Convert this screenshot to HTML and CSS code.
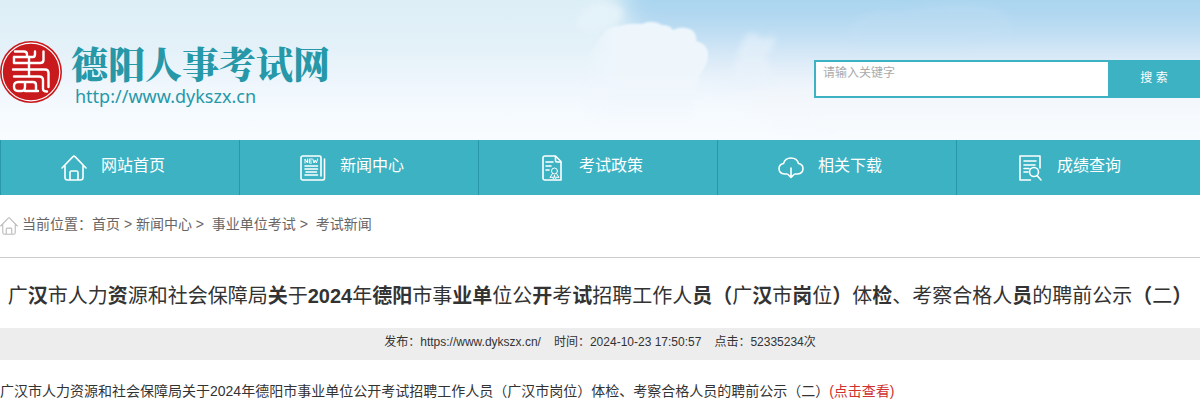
FILE: index.html
```
<!DOCTYPE html>
<html lang="zh-CN">
<head>
    <meta charset="UTF-8">
    <title>德阳人事考试网</title>
    <link rel="stylesheet" href="styles.css">
</head>
<body>

<header class="header">
    <svg class="sky" viewBox="0 0 1200 140" preserveAspectRatio="none" aria-hidden="true">
        <defs>
            <linearGradient id="blue" x1="0" y1="0" x2="0" y2="140" gradientUnits="userSpaceOnUse">
                <stop offset="0" stop-color="#a8d4ef"/>
                <stop offset=".2" stop-color="#b9dbf2"/>
                <stop offset=".45" stop-color="#dfecf8"/>
                <stop offset=".65" stop-color="#f3f7fc"/>
                <stop offset="1" stop-color="#f8fbfe"/>
            </linearGradient>
            <linearGradient id="cloud" x1="0" y1="0" x2="0" y2="1">
                <stop offset="0" stop-color="#edf6fc"/>
                <stop offset=".6" stop-color="#eff6fc"/>
                <stop offset="1" stop-color="#f1f7fd" stop-opacity="0"/>
            </linearGradient>
            <linearGradient id="left" x1="0" y1="0" x2="1" y2="0">
                <stop offset="0" stop-color="#000"/>
                <stop offset=".25" stop-color="#fff"/>
            </linearGradient>
            <mask id="side"><rect x="580" y="0" width="150" height="140" fill="url(#left)"/></mask>
            <filter id="soft" x="-30%" y="-30%" width="160%" height="160%"><feGaussianBlur stdDeviation="1"/></filter>
            <filter id="haze" x="-50%" y="-50%" width="200%" height="200%"><feGaussianBlur stdDeviation="12"/></filter>
            <filter id="mist" x="-50%" y="-50%" width="200%" height="200%"><feGaussianBlur stdDeviation="3"/></filter>
        </defs>
        <path d="M615 -40H1260V180H830L760 100 690 70 630 30Z" fill="url(#blue)" filter="url(#haze)"/>
        <path d="M580 14Q590 0 606 3Q622 3 623 14Q620 24 606 27L592 34 576 26Z" fill="#e6f3fa" opacity=".8" filter="url(#mist)"/>
        <g mask="url(#side)">
            <path d="M603 34Q608 26 620 26Q630 23 642 24Q652 19 662 25Q670 25 673 30Q682 25 692 30Q697 34 696 41Q708 44 708 55Q708 64 700 74L690 120 560 120 590 50Z" fill="url(#cloud)" filter="url(#soft)"/>
        </g>
        <path d="M738 54Q742 36 752 32Q762 42 774 36Q778 44 766 56L776 84 730 84Z" fill="#e9f3fb" opacity=".6" filter="url(#mist)"/>
        <path d="M850 26Q870 6 900 12Q940 0 990 6Q1016 14 1010 34L960 44 850 44Z" fill="#c6e1f4" opacity=".25" filter="url(#mist)"/>
    </svg>

    <a class="logo" href="#">
        <svg class="seal" viewBox="0 0 62 62" aria-hidden="true">
            <circle cx="31" cy="31" r="31" fill="#c8191d"/>
            <circle cx="31" cy="31" r="28.800" fill="none" stroke="#fff" stroke-width="1.2"/>
            <g fill="none" stroke="#fff" stroke-width="2.400" stroke-linejoin="round" stroke-linecap="round">
                <path d="M15 10.500H24Q27 10.500 27 13.500V16M14 16H33Q35 16 35 13V10.500"/>
                <path d="M14 16V22H40Q43.500 22 43.500 19V10.500M29 16V35"/>
                <path d="M13 28.500H45Q48.500 28.500 48.500 32V46"/>
                <path d="M14 35.500H39Q43 35.500 43 39V48Q43 50.500 47 50.500"/>
                <path d="M18 41H33Q36 41 36 44V50M18 41Q14 41 14 45.500Q14 50 18 50H22Q25 50 25 46V41M25 50H38"/>
            </g>
        </svg>
        <span class="logo-text">
            <strong>德阳人事考试网</strong>
            <span>http://www.dykszx.cn</span>
        </span>
    </a>

    <form class="search">
        <input type="text" name="keyword" placeholder="请输入关键字" aria-label="请输入关键字">
        <button type="submit">搜 索</button>
    </form>
</header>

<nav class="nav">
    <a href="#">
        <svg viewBox="0 0 26 26"><path d="M1 13 12 1.600Q13 .6 14 1.600L25 13M4 11V22.500Q4 25 6.500 25H19.500Q22 25 22 22.500V11M9 25V17.500Q9 16 10.500 16H15.500Q17 16 17 17.500V25"/></svg>
        网站首页
    </a>
    <a href="#">
        <svg viewBox="0 0 26 26"><path d="M21 21V2.500Q21 1 19.500 1H3Q1 1 1 3V23Q1 25 3 25H23Q24.500 25 24.500 23.500V4M5 11H17.500M5 14H17.500M6 17H16.500M5 20H17.500"/><path class="thin" d="M5 8V4L7.500 8V4M11.500 4H9.300V8H11.500M9.300 6H11.300M12.800 4 14 8 15.200 5 16.400 8 17.600 4"/></svg>
        新闻中心
    </a>
    <a href="#">
        <svg viewBox="0 0 26 26"><path d="M16.500 1H6Q4 1 4 3V23Q4 25 6 25H22V6.500L16.500 1V5.500Q16.500 7 18 7H22M7 7H14M7 11H12M7 15H10"/><g class="thin"><circle cx="15.500" cy="16" r="3"/><path d="M13.500 18.500 11 22.500 13.500 22 14.500 24 15.500 20 16.500 24 17.500 22 20 22.500 17.500 18.500"/></g></svg>
        考试政策
    </a>
    <a href="#">
        <svg viewBox="0 0 26 26"><path d="M9 19H6.500Q1 18.500 1 13.500Q1 9.500 5.500 8.500Q7 3 13 3Q19 3 20.500 8.500Q25 9.500 25 13.500Q25 18.500 19.500 19H17M13 13V22M10 19.500 13 22.500 16 19.500"/></svg>
        相关下载
    </a>
    <a href="#">
        <svg viewBox="0 0 26 26"><path d="M13.500 25H3V1H23V13M7 6H19M7 10H18M7 13.500H12M7 17H11"/><circle cx="17" cy="17" r="4.500"/><path d="M20 20.500 24 25"/></svg>
        成绩查询
    </a>
</nav>

<div class="crumbs">
    <svg viewBox="0 0 26 26" aria-hidden="true"><path d="M1 13 12 1.600Q13 .6 14 1.600L25 13M4 11V22.500Q4 25 6.500 25H19.500Q22 25 22 22.500V11M9 25V17.500Q9 16 10.500 16H15.500Q17 16 17 17.500V25"/></svg>
    <span>当前位置：<a href="#">首页</a> &gt; <a href="#">新闻中心</a> &gt;&nbsp; <a href="#">事业单位考试</a> &gt;&nbsp; <a href="#">考试新闻</a></span>
</div>

<main class="article">
    <h1>广<b>汉</b>市人力<b>资</b>源和社会保障局<b>关</b>于<b>2024</b>年<b>德阳</b>市事<b>业单</b>位公<b>开</b>考<b>试</b>招聘工作人<b>员（</b>广<b>汉</b>市<b>岗</b>位<b>）</b>体<b>检</b>、考察合格人<b>员</b>的聘前公示<b>（</b>二<b>）</b></h1>
    <div class="meta">
        <span>发布：https://www.dykszx.cn/</span>
        <span>时间：2024-10-23 17:50:57</span>
        <span>点击：52335234次</span>
    </div>
    <p>广汉市人力资源和社会保障局关于2024年德阳市事业单位公开考试招聘工作人员（广汉市岗位）体检、考察合格人员的聘前公示（二）<a href="#">(点击查看)</a></p>
</main>

</body>
</html>
```
FILE: styles.css
```
body {
    margin: 0;
    font-family: "Liberation Sans", "Noto Sans CJK SC", sans-serif;
    font-size: 14px;
    color: #333;
    background-color: #fff;
}
a {
    color: inherit;
    text-decoration: none;
}
.header {
    position: relative;
    display: flex;
    justify-content: space-between;
    align-items: flex-start;
    height: 140px;
    background: linear-gradient(#dceef6, #e4f1f8 35%, #edf5fc 55%, #f5fafe 80%, #f8fcff);
    overflow: hidden;
}
.sky {
    position: absolute;
    top: 0;
    left: 0;
    width: 100%;
    height: 100%;
}
.logo {
    position: relative;
    display: flex;
    gap: 9px;
    padding-top: 41px;
    color: #2698a8;
}
.seal {
    width: 62px;
    height: 62px;
}
.logo-text strong {
    display: block;
    font-family: "Noto Serif CJK SC", "Noto Sans CJK SC", serif;
    font-size: 37px;
    font-weight: 900;
    line-height: 44px;
}
.logo-text span {
    display: block;
    padding-left: 4px;
    font-family: "Noto Sans", sans-serif;
    font-size: 18px;
    line-height: 22px;
}
.search {
    position: relative;
    display: flex;
    box-sizing: border-box;
    width: 386px;
    height: 38px;
    margin-top: 60px;
    border: 2px solid #3cb2c3;
    border-right: none;
    background-color: #fff;
}
.search input {
    flex: 1;
    min-width: 0;
    padding: 0 7px 12px;
    border: none;
    outline: none;
    background: none;
    font-family: inherit;
    font-size: 12px;
}
.search input::placeholder {
    color: #aaa;
}
.search button {
    width: 92px;
    padding: 0 0 6px;
    border: none;
    background-color: #3cb2c3;
    color: #fff;
    font-family: inherit;
    font-size: 12px;
    cursor: pointer;
}
.nav {
    display: grid;
    grid-template-columns: repeat(5, 1fr);
    padding-right: 5px;
    background-color: #3cb2c3;
}
.nav a {
    display: flex;
    gap: 14px;
    height: 55px;
    padding-left: 60px;
    border-left: 1px solid #2698a8;
    color: #fff;
    font-size: 16px;
    line-height: 52px;
}
.nav svg {
    width: 26px;
    height: 26px;
    margin-top: 15px;
}
.nav svg, .crumbs svg {
    fill: none;
    stroke: #fff;
    stroke-width: 1.6;
    stroke-linecap: round;
    stroke-linejoin: round;
}
.nav .thin {
    stroke-width: 1;
}
.crumbs {
    display: flex;
    gap: 4px;
    height: 62px;
    border-bottom: 1px solid #ccc;
    color: #666;
    line-height: 58px;
}
.crumbs svg {
    width: 18px;
    height: 18px;
    margin-top: 22px;
    stroke: #bbb;
}
.article h1 {
    margin: 0;
    padding: 18px 0 12px;
    font-size: 20px;
    font-weight: normal;
    line-height: 40px;
    text-align: center;
}
.meta {
    display: flex;
    justify-content: center;
    gap: 13px;
    height: 32px;
    background-color: #ededed;
    font-size: 12px;
    line-height: 28px;
}
.article p {
    margin: 16px 0 0;
    line-height: 30px;
}
.article p a {
    color: #d0302f;
}
```
